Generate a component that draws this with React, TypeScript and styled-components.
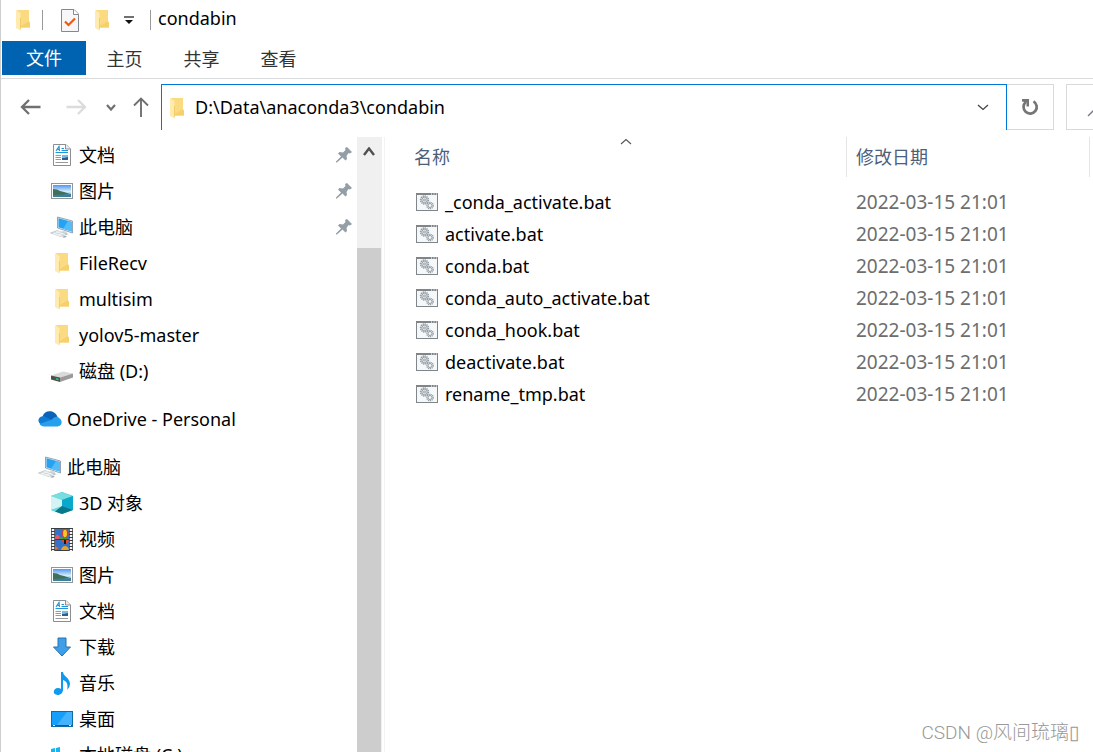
import React from "react";
import styled, { createGlobalStyle } from "styled-components";

const GlobalStyle = createGlobalStyle`
  * { box-sizing: border-box; }
  body {
    margin: 0;
    background: #fff;
    color: #000;
    font-family: "Noto Sans", "Noto Sans CJK SC", sans-serif;
    font-size: 18px;
    line-height: 24px;
  }
  button, input { font: inherit; color: inherit; }
  svg { flex: none; }
`;

const Explorer = styled.div`
  position: relative;
  display: flex;
  flex-direction: column;
  height: 100vh;
  overflow: hidden;
  border-left: 1px solid #cfcfcf;
`;

const TitleBar = styled.header`
  display: flex;
  align-items: center;
  height: 40px;
  padding-left: 12px;
  flex: none;
`;

const QuickButton = styled.button<{ $width: number }>`
  display: flex;
  align-items: center;
  justify-content: center;
  width: ${(p) => p.$width}px;
  height: 28px;
  padding: 0;
  border: 0;
  background: none;
`;

const TitleDivider = styled.span<{ $before: number; $after: number }>`
  width: 1px;
  height: 20px;
  margin: 0 ${(p) => p.$after}px 0 ${(p) => p.$before}px;
  background: #999;
`;

const WindowTitle = styled.h1`
  margin: 0 0 4px;
  font-size: 18px;
  font-weight: 400;
`;

const Ribbon = styled.nav`
  display: flex;
  align-items: flex-start;
  flex: none;
  height: 39px;
  padding: 1px 0 0 1px;
  border-bottom: 1px solid #dadbdc;
`;

const RibbonTab = styled.button<{ $active?: boolean }>`
  width: ${(p) => (p.$active ? 84 : 77)}px;
  height: 34px;
  padding: ${(p) => (p.$active ? "0" : "2px 0 0")};
  border: 0;
  background: ${(p) => (p.$active ? "#0063b1" : "transparent")};
  color: ${(p) => (p.$active ? "#fff" : "#333")};
`;

const NavigationBar = styled.div`
  display: flex;
  flex: none;
  height: 58px;
  padding: 5px 0 7px 17px;
`;

const NavButton = styled.button<{ $width: number; $gap?: number }>`
  display: flex;
  align-items: center;
  justify-content: center;
  width: ${(p) => p.$width}px;
  margin: 0 ${(p) => p.$gap ?? 0}px 0 0;
  padding: 0;
  border: 0;
  background: none;
`;

const AddressBox = styled.div`
  display: flex;
  align-items: center;
  flex: 1;
  min-width: 0;
  height: 46px;
  padding: 0 12px 0 7px;
  border: 1px solid #0078d7;
  border-bottom: 0;
`;

const AddressInput = styled.input`
  flex: 1;
  min-width: 0;
  margin-left: 10px;
  padding: 0 0 2px;
  border: 0;
  outline: 0;
  background: none;
`;

const RefreshButton = styled.button`
  display: flex;
  align-items: center;
  justify-content: center;
  width: 47px;
  height: 46px;
  padding: 0;
  border: 1px solid #d9d9d9;
  border-left: 0;
  background: #fff;
`;

const SearchButton = styled.button`
  display: flex;
  align-items: center;
  width: 27px;
  height: 46px;
  margin-left: 12px;
  padding: 0 0 0 20px;
  border: 1px solid #d9d9d9;
  border-right: 0;
  background: #fff;
  overflow: hidden;
`;

const Body = styled.div`
  display: flex;
  flex: 1;
  min-height: 0;
`;

const Sidebar = styled.nav`
  display: flex;
  flex-direction: column;
  gap: 12px;
  flex: 0 0 356px;
  overflow: hidden;
`;

const TreeGroup = styled.ul`
  margin: 0;
  padding: 0;
  list-style: none;
`;

const TreeLink = styled.a<{ $root?: boolean }>`
  display: flex;
  align-items: center;
  gap: 5px;
  height: 36px;
  padding: 0 5px 0 ${(p) => (p.$root ? 37 : 49)}px;
  color: inherit;
  text-decoration: none;
`;

const IconSlot = styled.span`
  display: flex;
  align-items: center;
  justify-content: center;
  flex: 0 0 24px;
  height: 24px;
`;

const TreeLabel = styled.span`
  flex: 1;
  white-space: nowrap;
`;

const Scrollbar = styled.div`
  display: flex;
  flex-direction: column;
  flex: 0 0 25px;
  padding-right: 1px;
  background: #f0f0f0;
`;

const ScrollUp = styled.button`
  display: flex;
  justify-content: center;
  height: 111px;
  padding: 10px 0 0;
  border: 0;
  background: none;
`;

const ScrollThumb = styled.div`
  flex: 1;
  background: #cdcdcd;
`;

const FilePane = styled.main`
  flex: 1;
  min-width: 0;
  margin-left: 2px;
  padding-right: 3px;
  border-left: 1px solid #f3f3f3;
`;

const FileTable = styled.table`
  width: 100%;
  table-layout: fixed;
  border-collapse: collapse;
`;

const HeaderCell = styled.th<{ $width?: number }>`
  width: ${(p) => (p.$width ? `${p.$width}px` : "auto")};
  padding: 0 0 9px;
  font-weight: 400;
  text-align: left;
`;

const HeaderLabel = styled.div<{ $indent: number }>`
  position: relative;
  height: 40px;
  padding-left: ${(p) => p.$indent}px;
  border-right: 1px solid #e5e5e5;
  color: #4c607a;
  line-height: 40px;
`;

const SortMark = styled.span`
  position: absolute;
  top: 1px;
  left: 51%;
  display: flex;
`;

const NameCell = styled.td`
  height: 32px;
  padding: 0 0 0 31px;
`;

const FileName = styled.div`
  display: flex;
  align-items: center;
  gap: 7px;
`;

const DateCell = styled.td`
  padding: 0 0 0 9px;
  color: #6d6d6d;
  font-size: 19px;
  white-space: nowrap;
`;

const Watermark = styled.div`
  position: absolute;
  right: 14px;
  bottom: 7px;
  color: #999;
  font-family: Roboto, "Noto Sans CJK SC", sans-serif;
  font-size: 19px;
  font-weight: 300;
  white-space: nowrap;
`;

const FolderIcon = () => (
  <svg width="16" height="22" viewBox="0 0 16 22">
    <path d="M2 1H14V13L15 14V18.500H5Z" fill="#fadb82" />
    <path d="M14 12L15 14V18.500H5L6 17Z" fill="#f7d06c" />
    <path d="M1 1L5.500 4V21.500L1 19Z" fill="#ffebb0" />
    <path d="M5 9H6V18.500L5 21.500Z" fill="#f3cd69" />
  </svg>
);

const PropertiesIcon = () => (
  <svg width="18" height="23" viewBox="0 0 18 23">
    <path d="M.5 .5H13L17.500 5V22.500H.5Z" fill="#f7f7f9" stroke="#85898f" />
    <path d="M12.500 .5V5.500H17.500" fill="#fff" stroke="#85898f" />
    <path d="M4 12.500L7.500 16L14 9.500" fill="none" stroke="#f0590e" strokeWidth="2.200" />
  </svg>
);

const CustomizeIcon = () => (
  <svg width="10" height="9" viewBox="0 0 10 9">
    <path d="M0 1H10" stroke="#111" strokeWidth="1.200" />
    <path d="M1 4H9L5 8Z" fill="#111" />
  </svg>
);

const ArrowIcon = ({ color, flip, up }: { color: string; flip?: boolean; up?: boolean }) => (
  <svg width="22" height="22" viewBox="0 0 22 22">
    <path
      d={up ? "M11 21V2M4 9.500L11 2.500L18 9.500" : flip ? "M1.500 11H20M13 4L20 11L13 18" : "M20.500 11H2M9 4L2 11L9 18"}
      fill="none"
      stroke={color}
      strokeWidth={up ? 1.9 : 2.3}
    />
  </svg>
);

const ChevronIcon = ({ width, height, stroke, color, up }: { width: number; height: number; stroke: number; color: string; up?: boolean }) => (
  <svg width={width} height={height} viewBox={`0 0 ${width} ${height}`}>
    <path
      d={up ? `M1 ${height - 1}L${width / 2} 1.500L${width - 1} ${height - 1}` : `M1 1L${width / 2} ${height - 1.5}L${width - 1} 1`}
      fill="none"
      stroke={color}
      strokeWidth={stroke}
    />
  </svg>
);

const RefreshIcon = () => (
  <svg width="18" height="18" viewBox="0 0 18 18">
    <path d="M12.500 3.300A6.600 6.600 0 1 1 4.800 4" fill="none" stroke="#757575" strokeWidth="2.700" />
    <path d="M1 1H8V8.500H5.500V4.500L1 3.500Z" fill="#757575" />
  </svg>
);

const SearchIcon = () => (
  <svg width="20" height="20" viewBox="0 0 20 20">
    <path d="M1 19L8 12" stroke="#7f7783" strokeWidth="1.300" />
    <circle cx="13" cy="7" r="6" fill="none" stroke="#7f7783" strokeWidth="1.300" />
  </svg>
);

const DocumentIcon = () => (
  <svg width="18" height="22" viewBox="0 0 18 22">
    <path d="M.5 .5H13L17.500 5V21.500H.5Z" fill="#fff" stroke="#8c8f91" />
    <path d="M12.500 .5V5H17.500" fill="#eee" stroke="#8c8f91" />
    <path d="M3 7L6 2.500L6.500 7M4 5.500H6.500" fill="none" stroke="#2196d8" strokeWidth="1.200" />
    <path d="M8.500 4.500H11M8.500 6.500H15M2.500 8.500H15" stroke="#2196d8" />
    <path d="M2.500 11.500H8M2.500 13.500H8M2.500 15.500H8M2.500 18.500H15" stroke="#999" />
    <rect x="9" y="11" width="6" height="5" fill="#315d87" />
    <path d="M9 11H15V13L11 14H9Z" fill="#73bde8" />
  </svg>
);

const PictureIcon = () => (
  <svg width="22" height="16" viewBox="0 0 22 16">
    <defs>
      <linearGradient id="sky" x2="0" y2="1">
        <stop stopColor="#5296ee" />
        <stop offset=".55" stopColor="#d5eefa" />
        <stop offset="1" stopColor="#418cae" />
      </linearGradient>
    </defs>
    <rect x=".5" y=".5" width="21" height="15" fill="#fff" stroke="#929698" />
    <rect x="2" y="2" width="18" height="12" fill="url(#sky)" />
    <path d="M2 6L6 6.500L9 8L13 9L19 11L12 12H2Z" fill="#426f58" />
    <path d="M2 12L12 11.500L20 11V14H2Z" fill="#398099" />
  </svg>
);

const ComputerIcon = () => (
  <svg width="24" height="22" viewBox="0 0 24 22">
    <path d="M7.500 1L22.500 5V17L7.500 12Z" fill="#dbe6ec" stroke="#7893a4" strokeWidth=".8" />
    <path d="M8.500 2.300L22 6V15.500L8.500 11.300Z" fill="#25a2f2" />
    <path d="M18 5L22 6V15.500L13 12.700Z" fill="#55bcfa" />
    <path d="M13 14.500L17 15.500V17L19 18.500L15 19.500L10 17.500Z" fill="#d5dde1" />
    <path d="M.5 17L7 14.500L17 18L10.500 20.500Z" fill="#d3dade" stroke="#b1bbc1" strokeWidth=".6" />
    <path d="M3 17.500L12 20M6 15.500L15 18.500M3.500 18L9.500 15.500M7.500 19.500L13 17" stroke="#f8fafb" strokeWidth=".8" />
    <path d="M12 21L15 19.800L17 20.700L14 21.700Z" fill="#9ba8b1" />
  </svg>
);

const DriveIcon = () => (
  <svg width="22" height="22" viewBox="0 0 22 22">
    <path d="M0 15.500L12 11.500L22 13.500L9 17.500Z" fill="#dadada" />
    <path d="M0 15.500L9 17.500V22L0 19.500Z" fill="#505050" />
    <path d="M9 17.500L22 13.500V17.500L9 22Z" fill="#9b9b9b" />
    <path d="M5 18L7.500 18.700V20.200L5 19.500Z" fill="#26d66c" />
  </svg>
);

const CloudIcon = () => (
  <svg width="24" height="16" viewBox="0 0 24 16">
    <path d="M4.500 5.500C6 1.500 9 0 12 .3C15.500 .3 18.500 3 19.500 6L13 10L4.500 5.500Z" fill="#0a62b9" />
    <path d="M3 13.500C-2 10 1 4.500 6 5.200L15 9.500L10 15Z" fill="#0f7bd5" />
    <path d="M14 8.500C16 5.500 19.500 5 21 7C25 9 24.500 15.500 19.500 15.500H6C4 15.500 2.500 14.500 1.500 13Z" fill="#26a0ec" />
  </svg>
);

const CubeIcon = () => (
  <svg width="22" height="22" viewBox="0 0 22 22">
    <path d="M0 4L11 0L22 4V18L11 22L0 18Z" fill="#32bdcb" />
    <path d="M0 4L11 0L22 4L11 8Z" fill="#78dde0" />
    <path d="M0 4L11 8V15L0 18Z" fill="#d2f4f4" />
    <path d="M11 8L22 4V18L11 14Z" fill="#08a9cc" />
    <path d="M0 18L11 14V22Z" fill="#67d7dc" />
    <path d="M11 14L22 18L11 22L4 19.500Z" fill="#08798c" />
  </svg>
);

const VideoIcon = () => (
  <svg width="22" height="23" viewBox="0 0 22 23">
    <path d="M0 0H22V23H0Z" fill="#3b3e40" />
    <path d="M2 1V23M20 1V23" stroke="#f5f5f5" strokeWidth="2.500" strokeDasharray="2 1" />
    <path d="M4 1H18V11H4ZM4 12H18V22H4Z" fill="#3471c8" />
    <circle cx="14" cy="5.500" r="3.800" fill="#dd392e" />
    <ellipse cx="14" cy="5.500" rx="2" ry="3.800" fill="#efca23" />
    <path d="M4 9Q6 5 8 8L11 11H4Z" fill="#eb5770" />
    <path d="M8 9H12V11H8M13 10H16V11H13Z" fill="#3c9e40" />
    <path d="M10 12H18Q16 16 14 16Z" fill="#e44929" />
    <path d="M13 12H15V16H13Z" fill="#21150e" />
    <path d="M10 22Q11 18 14 18Q17 18 18 22Z" fill="#e4a424" />
    <path d="M4 18L8 20L5 22H4Z" fill="#df6b36" />
  </svg>
);

const DownloadIcon = () => (
  <svg width="20" height="20" viewBox="0 0 20 20">
    <path d="M6 1H14V10H18.500L10 19L1.500 10H6Z" fill="#3e9ee8" stroke="#2672b2" />
  </svg>
);

const MusicIcon = () => (
  <svg width="18" height="23" viewBox="0 0 18 23">
    <path d="M8 0H10C10 4 17 6 17 12Q17 15.500 14 18Q16 10 10 8V18C10 21 7 23 4.500 23C-1 23 0 16 5 16Q7 16 8 17Z" fill="#109aef" />
  </svg>
);

const DesktopIcon = () => (
  <svg width="22" height="16" viewBox="0 0 22 16">
    <rect x=".5" y=".5" width="21" height="15" fill="#159ffb" stroke="#126ca4" />
    <path d="M16 1H21V14H6Z" fill="#43b3ff" />
    <path d="M1 14.500H21" stroke="#075d9c" />
    <path d="M2 14.500H4M18 14.500H20" stroke="#fff" />
  </svg>
);

const SystemDriveIcon = () => (
  <svg width="22" height="22" viewBox="0 0 22 22">
    <path d="M0 5L4 4V8H0ZM5 4L9 3V8H5ZM0 9H4V12H0ZM5 9H9V13L5 12Z" fill="#17b4ed" />
    <path d="M0 15L12 12L22 14L9 18Z" fill="#ddd" />
    <path d="M0 15L9 18V22L0 19Z" fill="#555" />
    <path d="M9 18L22 14V18L9 22Z" fill="#999" />
  </svg>
);

const PinIcon = () => (
  <svg width="16" height="16" viewBox="0 0 16 16">
    <path d="M9 1L11 0L16 5L14 6.500L12.500 6L10.500 9L11 12L9.500 13.500L6.500 10.500L1 15.500L0 15.500V14.500L5 9.500L2 6.500L3.500 5L7 5.500L9.500 3Z" fill="#939ea6" />
  </svg>
);

const BatchIcon = () => (
  <svg width="22" height="18" viewBox="0 0 22 18">
    <rect x=".5" y=".5" width="21" height="17" fill="#f6f7f8" stroke="#808589" />
    <path d="M0 1H22" stroke="#808589" strokeWidth="2" />
    <path d="M15 1H16M17.500 1H18.500M20 1H21" stroke="#fff" />
    <g fill="none" stroke="#8f9ba3">
      <circle cx="8.500" cy="7" r="3.900" strokeWidth="1.600" strokeDasharray="1.300 .7" />
      <circle cx="8.500" cy="7" r="2.700" />
      <circle cx="8.500" cy="7" r="1" />
      <circle cx="14" cy="12.500" r="3.200" strokeWidth="1.300" strokeDasharray="1.200 .7" />
      <circle cx="14" cy="12.500" r="2" />
    </g>
  </svg>
);

type TreeItem = { label: string; icon: React.ReactNode; root?: boolean; pinned?: boolean };

const groups: TreeItem[][] = [
  [
    { label: "文档", icon: <DocumentIcon />, pinned: true },
    { label: "图片", icon: <PictureIcon />, pinned: true },
    { label: "此电脑", icon: <ComputerIcon />, pinned: true },
    { label: "FileRecv", icon: <FolderIcon /> },
    { label: "multisim", icon: <FolderIcon /> },
    { label: "yolov5-master", icon: <FolderIcon /> },
    { label: "磁盘 (D:)", icon: <DriveIcon /> },
  ],
  [{ label: "OneDrive - Personal", icon: <CloudIcon />, root: true }],
  [
    { label: "此电脑", icon: <ComputerIcon />, root: true },
    { label: "3D 对象", icon: <CubeIcon /> },
    { label: "视频", icon: <VideoIcon /> },
    { label: "图片", icon: <PictureIcon /> },
    { label: "文档", icon: <DocumentIcon /> },
    { label: "下载", icon: <DownloadIcon /> },
    { label: "音乐", icon: <MusicIcon /> },
    { label: "桌面", icon: <DesktopIcon /> },
    { label: "本地磁盘 (C:)", icon: <SystemDriveIcon /> },
  ],
];

const files = [
  "_conda_activate.bat",
  "activate.bat",
  "conda.bat",
  "conda_auto_activate.bat",
  "conda_hook.bat",
  "deactivate.bat",
  "rename_tmp.bat",
];

export default function App() {
  return (
    <Explorer>
      <GlobalStyle />
      <TitleBar>
        <QuickButton $width={20} aria-label="condabin"><FolderIcon /></QuickButton>
        <TitleDivider $before={9} $after={14} />
        <QuickButton $width={26} aria-label="属性"><PropertiesIcon /></QuickButton>
        <QuickButton $width={38} aria-label="新建文件夹"><FolderIcon /></QuickButton>
        <QuickButton $width={16} aria-label="自定义快速访问工具栏"><CustomizeIcon /></QuickButton>
        <TitleDivider $before={13} $after={7} />
        <WindowTitle>condabin</WindowTitle>
      </TitleBar>
      <Ribbon>
        <RibbonTab $active>文件</RibbonTab>
        <RibbonTab>主页</RibbonTab>
        <RibbonTab>共享</RibbonTab>
        <RibbonTab>查看</RibbonTab>
      </Ribbon>
      <NavigationBar>
        <NavButton $width={26} $gap={6} aria-label="后退"><ArrowIcon color="#707070" /></NavButton>
        <NavButton $width={52} aria-label="前进"><ArrowIcon color="#dcdcdc" flip /></NavButton>
        <NavButton $width={18} aria-label="最近浏览的位置">
          <ChevronIcon width={10} height={7} stroke={2.2} color="#707070" />
        </NavButton>
        <NavButton $width={41} aria-label="上移"><ArrowIcon color="#707070" up /></NavButton>
        <AddressBox>
          <FolderIcon />
          <AddressInput aria-label="地址" defaultValue="D:\Data\anaconda3\condabin" />
          <NavButton $width={22} aria-label="以前的位置">
            <ChevronIcon width={12} height={7} stroke={1.3} color="#444" />
          </NavButton>
        </AddressBox>
        <RefreshButton aria-label="刷新"><RefreshIcon /></RefreshButton>
        <SearchButton aria-label="搜索"><SearchIcon /></SearchButton>
      </NavigationBar>
      <Body>
        <Sidebar>
          {groups.map((items, index) => (
            <TreeGroup key={index}>
              {items.map((item) => (
                <li key={item.label}>
                  <TreeLink href="#" $root={item.root}>
                    <IconSlot>{item.icon}</IconSlot>
                    <TreeLabel>{item.label}</TreeLabel>
                    {item.pinned && <PinIcon />}
                  </TreeLink>
                </li>
              ))}
            </TreeGroup>
          ))}
        </Sidebar>
        <Scrollbar>
          <ScrollUp aria-label="向上滚动">
            <ChevronIcon width={12} height={9} stroke={2.4} color="#505050" up />
          </ScrollUp>
          <ScrollThumb />
        </Scrollbar>
        <FilePane>
          <FileTable>
            <thead>
              <tr>
                <HeaderCell>
                  <HeaderLabel $indent={29}>
                    名称
                    <SortMark><ChevronIcon width={12} height={7} stroke={1.1} color="#555" up /></SortMark>
                  </HeaderLabel>
                </HeaderCell>
                <HeaderCell $width={243}>
                  <HeaderLabel $indent={9}>修改日期</HeaderLabel>
                </HeaderCell>
              </tr>
            </thead>
            <tbody>
              {files.map((name) => (
                <tr key={name}>
                  <NameCell><FileName><BatchIcon />{name}</FileName></NameCell>
                  <DateCell>2022-03-15 21:01</DateCell>
                </tr>
              ))}
            </tbody>
          </FileTable>
        </FilePane>
      </Body>
      <Watermark>CSDN @风间琉璃▯</Watermark>
    </Explorer>
  );
}
